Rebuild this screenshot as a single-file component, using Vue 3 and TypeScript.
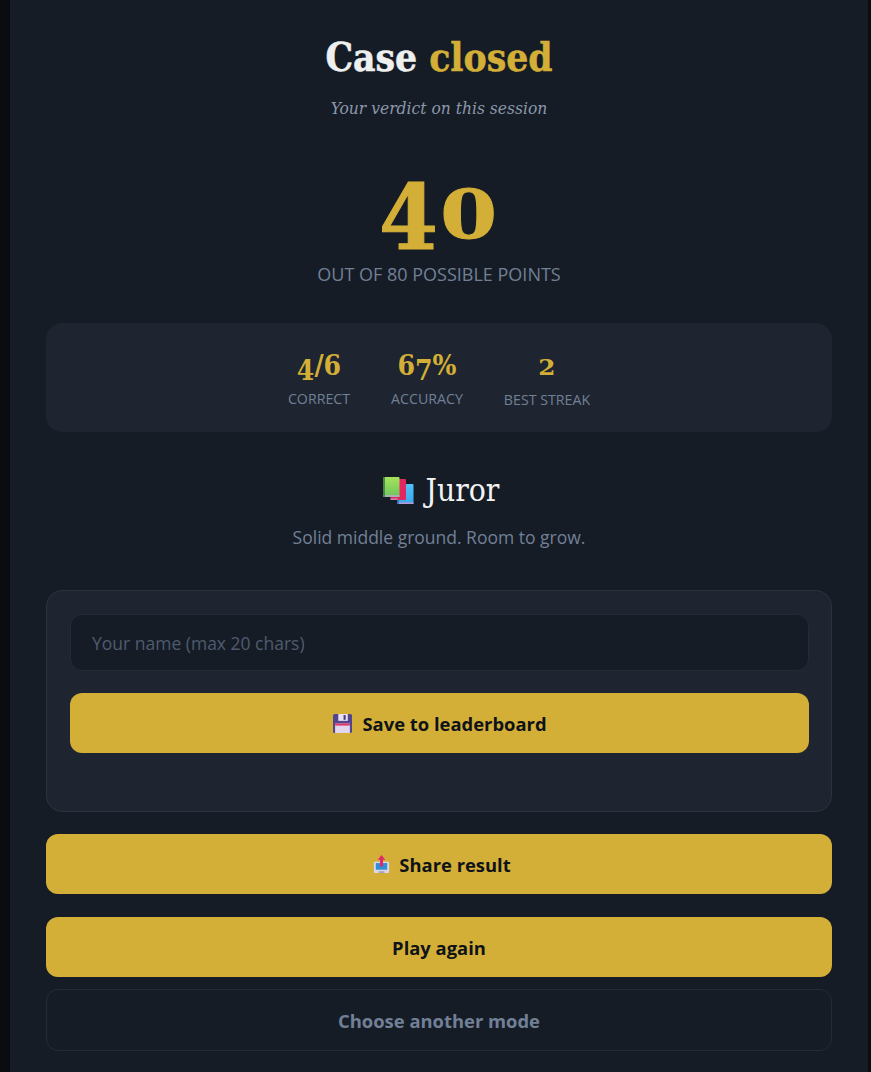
<script setup lang="ts">
interface Glyph { ch: string; kind: string }

// Old-style figures: low digits sit at x-height, others hang below the baseline.
function figures(value: string): Glyph[] {
  return [...value].map((ch) => {
    if ('012'.includes(ch)) return { ch, kind: 'low' }
    if ('34579'.includes(ch)) return { ch, kind: 'hang' }
    return { ch, kind: 'plain' }
  })
}

const stats: { value: string; label: string }[] = [
  { value: '4/6', label: 'CORRECT' },
  { value: '67%', label: 'ACCURACY' },
  { value: '2', label: 'BEST STREAK' },
]
</script>

<template>
  <div class="page">
    <main class="panel">
      <h1 class="title">Case <em>closed</em></h1>
      <p class="subtitle">Your verdict on this session</p>
      <div class="score">
        <span v-for="(g, i) in figures('40')" :key="i" :class="g.kind">{{ g.ch }}</span>
      </div>
      <div class="score-label">OUT OF 80 POSSIBLE POINTS</div>

      <section class="stats">
        <div v-for="s in stats" :key="s.label" class="stat">
          <div class="stat-value">
            <span v-for="(g, i) in figures(s.value)" :key="i" :class="g.kind">{{ g.ch }}</span>
          </div>
          <div class="stat-label">{{ s.label }}</div>
        </div>
      </section>

      <h2 class="rank">
        <svg class="rank-icon" viewBox="0 0 30 27" aria-hidden="true">
          <defs>
            <linearGradient id="bookBlue" x1="0" y1="0" x2="0" y2="1">
              <stop offset="0" stop-color="#4fc3f7" />
              <stop offset="1" stop-color="#3aa6ee" />
            </linearGradient>
            <linearGradient id="bookGreen" x1="0" y1="0" x2="0" y2="1">
              <stop offset="0" stop-color="#a6e35c" />
              <stop offset="1" stop-color="#6fc45e" />
            </linearGradient>
          </defs>
          <rect x="14" y="7" width="16" height="20" rx="1" fill="url(#bookBlue)" />
          <rect x="14" y="25.4" width="16" height="1.6" fill="#b49ad8" />
          <rect x="14" y="7" width="1.5" height="20" fill="#3a78c8" />
          <rect x="7" y="2" width="15.5" height="21" rx="1" fill="#e0285f" />
          <rect x="7" y="21.4" width="7" height="1.6" fill="#d080b8" />
          <rect x="0" y="0" width="16" height="20" rx="1" fill="url(#bookGreen)" />
          <rect x="0" y="18" width="16" height="2" fill="#a9b0b4" />
          <rect x="0" y="0" width="1.5" height="20" fill="#3f8f4a" />
        </svg>
        <span>Juror</span>
      </h2>
      <p class="rank-text">Solid middle ground. Room to grow.</p>

      <section class="form">
        <input class="name" type="text" placeholder="Your name (max 20 chars)" />
        <button class="btn gold" type="button">
          <svg class="btn-icon" viewBox="0 0 18 18" aria-hidden="true">
            <rect x="0" y="0" width="18" height="18" rx="1.5" fill="#54438f" />
            <rect x="5" y="0" width="9" height="6.5" fill="#e6e0f0" />
            <rect x="10" y="1" width="2" height="4.5" fill="#4a3d7c" />
            <rect x="2" y="9" width="14" height="9" fill="#e2d6ee" />
            <rect x="2" y="9" width="14" height="2" fill="#e0386b" />
          </svg>
          <span>Save to leaderboard</span>
        </button>
      </section>

      <button class="btn gold share" type="button">
        <svg class="btn-icon" viewBox="0 0 16 20" aria-hidden="true">
          <rect x="0" y="7" width="16" height="12" rx="1" fill="#ddd8e6" />
          <rect x="2" y="8.5" width="12" height="7" fill="#2f8fd8" />
          <rect x="5" y="17" width="6" height="2" fill="#a9a4bc" />
          <path d="M8 0 L12 5 H9.6 V12 H6.4 V5 H4 Z" fill="#e0286a" />
        </svg>
        <span>Share result</span>
      </button>
      <button class="btn gold again" type="button">Play again</button>
      <button class="btn ghost" type="button">Choose another mode</button>
    </main>
  </div>
</template>

<style>
html, body { margin: 0; background: #0a0c10; }
</style>

<style scoped>
.page {
  display: flex;
  padding: 0 3px 0 10px;
  height: 1072px;
  overflow: hidden;
  box-sizing: border-box;
  font-family: "Open Sans", "Noto Sans", sans-serif;
}
.panel {
  flex: 1;
  box-sizing: border-box;
  background: #161c26;
  padding: 31px 36px 0;
  text-align: center;
  min-width: 0;
}
.title {
  margin: 0;
  font-family: "DejaVu Serif Condensed", "DejaVu Serif", serif;
  font-size: 38.6px;
  line-height: 54px;
  font-weight: 700;
  -webkit-text-stroke: 0.5px currentColor;
  color: #eef0f0;
}
.title em { font-style: normal; color: #d4af37; }
.subtitle {
  margin: 9px 0 0;
  font-family: "DejaVu Serif Condensed", "DejaVu Serif", serif;
  font-style: italic;
  font-size: 17.3px;
  line-height: 28px;
  color: #8a98aa;
}
.score {
  margin-top: 38px;
  margin-bottom: 2px;
  display: flex;
  justify-content: center;
  align-items: baseline;
  gap: 5px;
  height: 100px;
  box-sizing: border-box;
  padding: 14px 9px 0 0;
  font-family: "DejaVu Serif", serif;
  font-weight: 700;
  font-size: 90px;
  color: #d4af37;
  -webkit-text-stroke: 1px currentColor;
}
.score span { display: inline-block; line-height: 64px; }
.score .hang { transform: translateY(11px) scaleX(0.94); transform-origin: bottom; }
.score .low { font-size: 68px; transform: scaleX(1.2); transform-origin: bottom; }
.score-label {
  font-size: 18px;
  line-height: 24px;
  color: #718096;
}
.stats {
  display: flex;
  justify-content: center;
  gap: 41px;
  height: 109px;
  box-sizing: border-box;
  margin-top: 37px;
  padding-top: 25px;
  border-radius: 16px;
  background: #1e2530;
}
.stat-value {
  font-family: "DejaVu Serif Condensed", "DejaVu Serif", serif;
  font-weight: 700;
  font-size: 28px;
  line-height: 36px;
  color: #d4af37;
}
.stat-value span { display: inline-block; }
.stat-value .hang { transform: translateY(5px); }
.stat-value .low { font-size: 22px; transform: scaleX(1.25); }
.stat-label {
  font-size: 14.2px;
  line-height: 18px;
  margin-top: 6px;
  color: #718096;
}
.rank {
  display: flex;
  align-items: center;
  justify-content: center;
  gap: 12px;
  margin: 38px 0 0;
  padding-left: 4px;
  font-family: "DejaVu Serif Condensed", "DejaVu Serif", serif;
  font-weight: 400;
  font-size: 31.5px;
  line-height: 40px;
  color: #f2f3f3;
}
.rank-icon { width: 31px; height: 27px; }
.rank-text {
  margin: 14px 0 0;
  font-size: 17.5px;
  line-height: 26px;
  color: #718096;
}
.form {
  box-sizing: border-box;
  height: 222px;
  margin-top: 40px;
  padding: 23px 22px 0 23px;
  border: 1px solid #2a3240;
  border-radius: 16px;
  background: #1e2530;
}
.name {
  display: block;
  width: 100%;
  height: 57px;
  box-sizing: border-box;
  padding: 0 21px;
  border: 1px solid #232b38;
  border-radius: 12px;
  outline: none;
  background: #161c26;
  color: #eef0f0;
  font: 17.5px "Open Sans", "Noto Sans", sans-serif;
}
.name::placeholder { color: #4e5b6e; opacity: 1; }
.btn {
  display: flex;
  align-items: center;
  justify-content: center;
  gap: 11px;
  width: 100%;
  box-sizing: border-box;
  border-radius: 12px;
  font: 700 18.4px "Open Sans", "Noto Sans", sans-serif;
  cursor: pointer;
}
.gold {
  height: 60px;
  border: 0;
  background: #d4af37;
  color: #0f1319;
}
.form .btn { margin-top: 22px; padding-left: 7px; gap: 10px; }
.btn-icon { width: 19px; height: 19px; }
.share { margin-top: 22px; gap: 8px; padding-left: 11px; }
.again { margin-top: 23px; }
.ghost {
  height: 62px;
  margin-top: 12px;
  border: 1px solid #232b38;
  background: transparent;
  color: #718096;
}
</style>
